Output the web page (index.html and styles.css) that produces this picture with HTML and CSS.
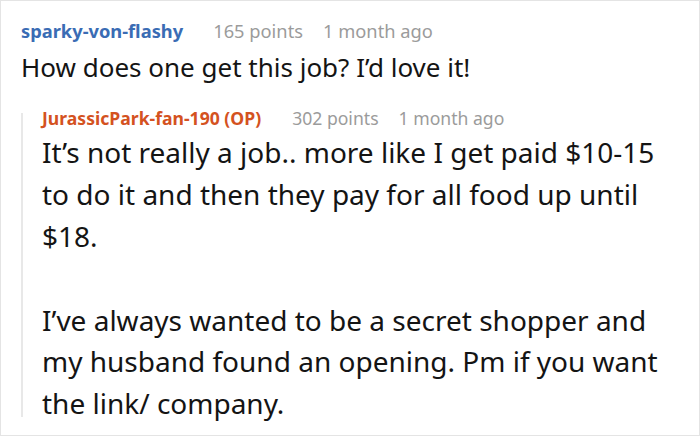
FILE: index.html
```html
<!DOCTYPE html>
<html>
<head>
<meta charset="utf-8">
<link rel="stylesheet" href="styles.css">
</head>
<body>
<div class="frame">
  <div class="comment">
    <div class="head">
      <span class="user">sparky-von-flashy</span>
      <span class="points">165 points</span>
      <span class="time">1 month ago</span>
    </div>
    <div class="body"><p>How does one get this job? I’d love it!</p></div>
  </div>
  <div class="reply">
    <div class="head">
      <span class="user op">JurassicPark-fan-190 (OP)</span>
      <span class="points">302 points</span>
      <span class="time">1 month ago</span>
    </div>
    <div class="body">
      <p>It’s not really a job.. more like I get paid $10-15 to do it and then they pay for all food up until $18.</p>
      <p>I’ve always wanted to be a secret shopper and my husband found an opening. Pm if you want the link/ company.</p>
    </div>
  </div>
</div>
</body>
</html>
```
FILE: styles.css
```css
html, body {
  margin: 0;
  padding: 0;
  background: #fff;
}
.frame {
  box-sizing: border-box;
  width: 700px;
  height: 436px;
  border: 1px solid #e4e4e4;
  padding: 17.5px 20px 0 20px;
  overflow: hidden;
  font-family: "Noto Sans", "Open Sans", sans-serif;
  color: #141414;
}
.head {
  display: flex;
  align-items: baseline;
  font-size: 18.3px;
  line-height: 24px;
  white-space: nowrap;
}
.user {
  font-weight: 700;
  color: #3a6cb4;
}
.user.op {
  color: #d4521f;
}
.points {
  color: #9b9b9b;
  margin-left: 30px;
}
.time {
  color: #9b9b9b;
  margin-left: 20px;
}
.body p {
  margin: 0;
}
.comment .body {
  font-size: 26px;
  line-height: 41.6px;
  margin-top: 4.9px;
}
.reply {
  display: flex;
  flex-direction: column;
  margin-top: 24px;
  border-left: 2px solid #e8e8e8;
  padding-left: 19px;
}
.reply .head {
  font-size: 17.6px;
  margin-top: -6.8px;
}
.reply .points {
  margin-left: 31px;
}
.reply .body {
  display: flex;
  flex-direction: column;
  font-size: 28px;
  line-height: 41.8px;
  margin-top: 2.3px;
}
.reply .body p + p {
  margin-top: 41.8px;
}
.reply .body p:last-child {
  margin-bottom: -8.1px;
}
```
